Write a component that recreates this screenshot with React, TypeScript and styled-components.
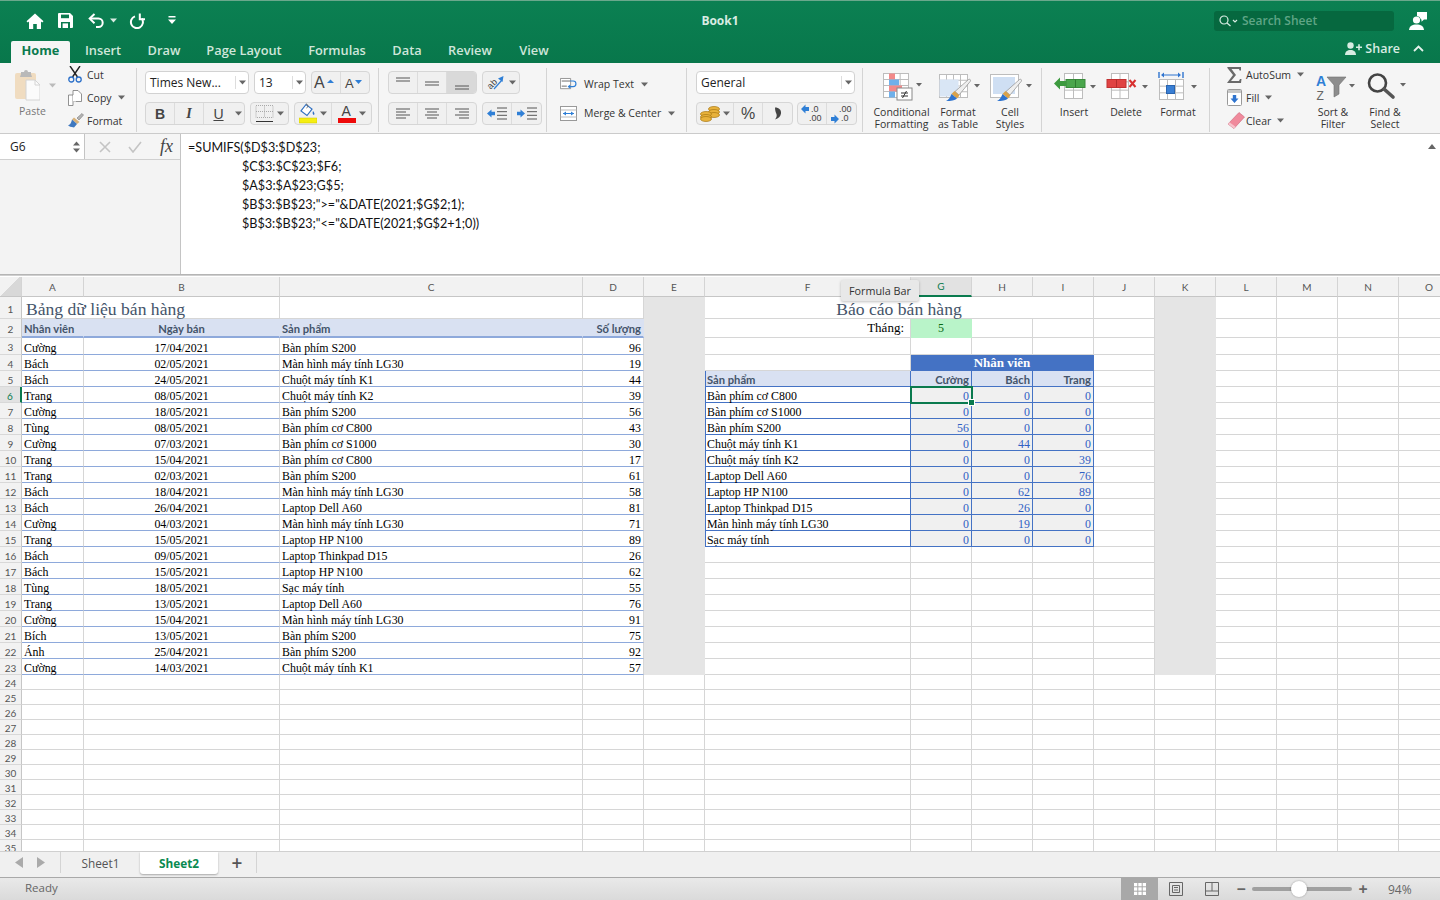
import React from "react";
import styled, { createGlobalStyle, css } from "styled-components";

const uiFont = `"Open Sans", "Liberation Sans", sans-serif`;
const calibri = `Lato, "Noto Sans", sans-serif`;
const times = `"Liberation Serif", serif`;

const GlobalStyle = createGlobalStyle`
  html, body { margin: 0; padding: 0; background: #fff; }
  * { box-sizing: border-box; }
`;

/* ---------- small drawings ---------- */

const Caret = ({ x, y, c = "#666" }: { x: number; y: number; c?: string }) => (
  <path d={`M${x} ${y}h6l-3 3.5z`} fill={c} />
);

const CaretIcon = ({ c = "#666" }: { c?: string }) => (
  <svg width="7" height="5" viewBox="0 0 7 5"><path d="M0 .5h7L3.5 4.5z" fill={c} /></svg>
);

const HomeIcon = () => (
  <svg width="18" height="16" viewBox="0 0 18 16">
    <path d="M9 .5 .5 8.2l1.3 1.2L3 8.4V16h4.2v-5h3.6v5H15V8.4l1.2 1 1.3-1.2z" fill="#fff" />
  </svg>
);
const SaveIcon = () => (
  <svg width="15" height="15" viewBox="0 0 15 15">
    <path d="M1 0h11l3 3v11a1 1 0 0 1-1 1H1a1 1 0 0 1-1-1V1a1 1 0 0 1 1-1z" fill="#fff" />
    <rect x="3" y="1.6" width="8" height="3.6" fill="#0a7a4e" />
    <rect x="3" y="9" width="9" height="6" fill="#0a7a4e" />
    <rect x="4.6" y="10.4" width="5.4" height="4.6" fill="#fff" />
  </svg>
);
const UndoIcon = () => (
  <svg width="17" height="15" viewBox="0 0 17 15" fill="none" stroke="#fff" strokeWidth="2">
    <path d="M6.5 1 1.7 5.6l4.8 4.6" />
    <path d="M2 5.6h8.5a4.2 4.2 0 0 1 0 8.4H8" />
  </svg>
);
const RedoIcon = () => (
  <svg width="16" height="16" viewBox="0 0 16 16" fill="none" stroke="#fff" strokeWidth="2">
    <path d="M6 3.4a6 6 0 1 0 6.8 2.2" />
    <path d="M10.8 .4v5.8H16" />
  </svg>
);
const CustomizeIcon = () => (
  <svg width="8" height="9" viewBox="0 0 8 9"><path d="M.5 0h7v1.6h-7zM0 3.6h8L4 8z" fill="#fff" /></svg>
);
const SearchIcon = () => (
  <svg width="20" height="12" viewBox="0 0 20 12" fill="none" stroke="#d9ece3" strokeWidth="1.2">
    <circle cx="5" cy="5" r="4" />
    <path d="m8 8 3.5 3" />
    <path d="m14 5 2 2 2-2" />
  </svg>
);
const PersonChatIcon = () => (
  <svg width="18" height="18" viewBox="0 0 18 18">
    <circle cx="7.5" cy="8" r="3.6" fill="#fff" />
    <path d="M0 18c.3-4 3.2-5.6 7.5-5.6S14.700 14 15 18z" fill="#fff" />
    <path d="M8 0h10v7.500h-3l-2.500 2.300V7.500H12A5 5 0 0 0 8 4z" fill="#fff" />
  </svg>
);
const AddPersonIcon = () => (
  <svg width="17" height="13" viewBox="0 0 17 13">
    <circle cx="5.500" cy="3.500" r="3.200" fill="#d8ece2" />
    <path d="M0 13c.2-3.600 2.200-5 5.500-5s5.300 1.400 5.500 5z" fill="#d8ece2" />
    <path d="M11 5.300h6M14 2.300v6" stroke="#d8ece2" strokeWidth="1.600" />
  </svg>
);
const ChevronUp = () => (
  <svg width="11" height="7" viewBox="0 0 11 7" fill="none" stroke="#e6f2ec" strokeWidth="1.800"><path d="m1 6 4.500-4.500L10 6" /></svg>
);
const PasteIcon = () => (
  <svg width="25" height="32" viewBox="0 0 25 32">
    <rect x="0" y="4" width="21" height="26" rx="2" fill="#f0dcc0" />
    <path d="M6 5V3h3a2 2 0 0 1 4 0h3v2l1 3H5z" fill="#b9b9b9" />
    <path d="M11 11h9l5 5v15H11z" fill="#fbfbfb" stroke="#d4d4d4" />
    <path d="M20 11v5h5" fill="none" stroke="#d4d4d4" />
  </svg>
);
const CutIcon = () => (
  <svg width="14" height="17" viewBox="0 0 14 17" fill="none">
    <path d="M2 0 9.500 11M12 0 4.500 11" stroke="#222" strokeWidth="1.400" />
    <circle cx="3.300" cy="13.500" r="2.500" stroke="#2a6fc9" strokeWidth="1.300" />
    <circle cx="10.700" cy="13.500" r="2.500" stroke="#2a6fc9" strokeWidth="1.300" />
  </svg>
);
const CopyIcon = () => (
  <svg width="14" height="16" viewBox="0 0 14 16" fill="#fff" stroke="#777" strokeWidth=".8">
    <path d="M5 .5h5l3.500 3.500v7.500H5z" />
    <path d="M.5 5H5v10.500H.5z" />
    <path d="M5 5h3v6.500H5z" stroke="none" />
  </svg>
);
const BrushIcon = () => (
  <svg width="16" height="15" viewBox="0 0 16 15">
    <path d="M9 5 14 .5l1.500 1.500L11 7z" fill="#b5b5b5" stroke="#777" strokeWidth=".6" />
    <path d="M6 4.500 11.500 9 9 11 4 6.500z" fill="#d8b27a" />
    <path d="M4 6.500 9 11l-3 3.500C3 14 1 13.500 0 12c2 0 3-1.500 4-5.500z" fill="#3f78bf" />
  </svg>
);
const GrowIcon = ({ up }: { up: boolean }) => (
  <svg width="26" height="21" viewBox="0 0 26 21">
    <text x={up ? 1 : 3} y="16" fontFamily="Liberation Sans" fontSize={up ? 16 : 13} fill="#444">A</text>
    <path d={up ? "M14 11l3.500-3.500L21 11z" : "M13 8h7l-3.500 4z"} fill="#2f7fd6" />
  </svg>
);
const AlignLines = ({ ys, x = [] as number[][] }: { ys: number[]; x?: number[][] }) => (
  <svg width="16" height="14" viewBox="0 0 16 14" stroke="#555" strokeWidth="1">
    {ys.map((y, i) => <line key={i} x1={x[i] ? x[i][0] : 1} x2={x[i] ? x[i][1] : 15} y1={y} y2={y} />)}
  </svg>
);
const OrientIcon = () => (
  <svg width="20" height="21" viewBox="0 0 20 21">
    <text x="1" y="15" fontFamily="Liberation Sans" fontSize="9" fill="#444" transform="rotate(-45 6 12)">ab</text>
    <path d="m8 17 8-9" stroke="#2f7fd6" strokeWidth="1.200" />
    <path d="m17.500 4-1 6-4.500-3.500z" fill="#2f7fd6" />
  </svg>
);
const IndentIcon = ({ right }: { right?: boolean }) => (
  <svg width="20" height="13" viewBox="0 0 20 13">
    <path d={right ? "M8 6.500 3.500 2.500v2.300H0v3.400h3.500v2.300z" : "M0 6.500 4.500 2.500v2.300H8v3.400H4.500v2.300z"} fill="#2f7fd6" />
    <path d="M10 1h10M10 4.700h10M10 8.300h10M10 12h10" stroke="#555" />
  </svg>
);
const BorderIcon = () => (
  <svg width="19" height="18" viewBox="0 0 19 18" fill="none">
    <path d="M1 .5h17v12H1zM9.500.5v12M1 6.500h17" stroke="#aaa" strokeDasharray="1 1" />
    <path d="M1 16.500h17" stroke="#333" />
  </svg>
);
const FillIcon = () => (
  <svg width="18" height="21" viewBox="0 0 18 21">
    <path d="M7 1.500 2 8l6 4.500 5-6.500z" fill="#fff" stroke="#2f6fc0" strokeWidth="1.200" />
    <path d="M7 1c2 0 2.500 3 .6 4" fill="none" stroke="#666" />
    <path d="M14 8c1.500 2 2 3 .8 4-1.200-.4-1.500-2-.8-4z" fill="#2f6fc0" />
    <rect x="0" y="15" width="18" height="5" fill="#f5ee12" stroke="#c9c300" strokeWidth=".5" />
  </svg>
);
const FontColorIcon = () => (
  <svg width="18" height="21" viewBox="0 0 18 21">
    <text x="3.500" y="13" fontFamily="Liberation Sans" fontSize="14" fill="#444">A</text>
    <rect x="0" y="15" width="18" height="5" fill="#ee0a0a" />
  </svg>
);
const WrapIcon = () => (
  <svg width="20" height="14" viewBox="0 0 20 14" fill="none">
    <path d="M.5 .5h12v12H.5z" stroke="#888" fill="#fff" />
    <path d="M2 3.500h10M2 9.500h6" stroke="#555" />
    <path d="M12 3.500h3.500a3 3 0 0 1 0 6.500H10" stroke="#2f7fd6" strokeWidth="1.400" />
    <path d="m12 7.500-3 2.500 3 2.500z" fill="#2f7fd6" />
  </svg>
);
const MergeIcon = () => (
  <svg width="17" height="15" viewBox="0 0 17 15" fill="none">
    <rect x=".5" y=".5" width="16" height="14" fill="#fff" stroke="#999" />
    <path d="M.5 4h16M.5 11h16" stroke="#bbb" />
    <path d="M3 7.500h11" stroke="#2f7fd6" />
    <path d="M3 7.500 6 5.500v4zM14 7.500l-3-2v4z" fill="#2f7fd6" />
  </svg>
);
const CoinsIcon = () => (
  <svg width="20" height="16" viewBox="0 0 20 16">
    {[[14, 3], [14, 6], [14, 9], [6, 8], [6, 11], [6, 13]].map(([x, y], i) => (
      <ellipse key={i} cx={x} cy={y} rx="5.500" ry="2.500" fill="#e8b23c" stroke="#a97813" strokeWidth=".7" />
    ))}
  </svg>
);
const CommaIcon = () => (
  <svg width="8" height="13" viewBox="0 0 8 13">
    <path d="M1 .5c4 0 6.500 2.500 6 6-.4 2.700-2.500 5-6 6 1.300-1.700 2-3.300 1.600-5C2.200 6 1 4.500 1 .5z" fill="#444" />
  </svg>
);
const DecimalIcon = ({ more }: { more?: boolean }) => (
  <svg width="22" height="20" viewBox="0 0 22 20">
    {more ? (
      <path d="M8 15 3.500 10.500V13H0v4h3.500v2.500z" fill="#2f7fd6" />
    ) : (
      <path d="M0 5 4.500 .5V3H8v4H4.500v2.500z" fill="#2f7fd6" />
    )}
    <text x={more ? 8 : 10} y="8" fontFamily="Liberation Sans" fontSize="9" fill="#444">{more ? ".00" : ".0"}</text>
    <text x={more ? 10 : 8} y="17" fontFamily="Liberation Sans" fontSize="9" fill="#444">{more ? ".0" : ".00"}</text>
  </svg>
);
const GridLines = ({ x, y, w, h, cols, rows }: { x: number; y: number; w: number; h: number; cols: number; rows: number }) => (
  <g stroke="#bdbdbd" fill="none">
    <rect x={x + 0.5} y={y + 0.5} width={w} height={h} fill="#fff" />
    {Array.from({ length: cols - 1 }, (_, i) => <line key={i} x1={x + 0.5 + ((i + 1) * w) / cols} x2={x + 0.5 + ((i + 1) * w) / cols} y1={y} y2={y + h} />)}
    {Array.from({ length: rows - 1 }, (_, i) => <line key={i} y1={y + 0.5 + ((i + 1) * h) / rows} y2={y + 0.5 + ((i + 1) * h) / rows} x1={x} x2={x + w} />)}
  </g>
);
const Brush = () => (
  <g>
    <path d="M36.500 8.500c1.500-.8 2.500.5 1.800 1.800L27 24l-4-3.500z" fill="#efefef" stroke="#8c8c8c" strokeWidth=".7" />
    <path d="M22.500 20l5 4.500-2.500 3-5.500-4.500z" fill="#d9a24a" />
    <path d="M19.500 23l5.500 4.500c-2 2-6 2.500-11 2.500 2.500-1 4-3.500 5.500-7z" fill="#2f74cf" />
  </g>
);
const ConditionalIcon = () => (
  <svg width="60" height="36" viewBox="0 0 60 36">
    <g transform="translate(11 2)">
      <GridLines x={0} y={0} w={25} h={24} cols={3} rows={4} />
      <rect x="6" y="0.500" width="6" height="6" fill="#f28a8a" />
      <rect x="6" y="6.500" width="10" height="6" fill="#6fb0ea" />
      <rect x="6" y="12.500" width="13" height="6" fill="#f28a8a" />
      <rect x="6" y="18.500" width="6" height="6" fill="#6fb0ea" />
      <rect x="14" y="15" width="15" height="12" fill="#fff" stroke="#888" />
      <path d="M18 20h7M18 23h7M23.500 18l-4 7" stroke="#333" fill="none" />
    </g>
    <Caret x={44} y={12} />
  </svg>
);
const TableStyleIcon = ({ cell }: { cell?: boolean }) => (
  <svg width="52" height="36" viewBox="0 0 52 36">
    <g transform={cell ? "translate(-1 0)" : undefined}>
      <GridLines x={7} y={3} w={28} h={23} cols={cell ? 1 : 4} rows={cell ? 1 : 4} />
      <rect x={cell ? 10 : 7.500} y={cell ? 6 : 8.500} width={cell ? 22 : 19} height={cell ? 17 : 17} fill={cell ? "#cfdff3" : "#d9e6f5"} />
      <Brush />
    </g>
    <Caret x={42} y={13} />
  </svg>
);
const InsertIcon = () => (
  <svg width="52" height="36" viewBox="0 0 52 36">
    <GridLines x={16} y={2} w={18} h={25} cols={2} rows={3} />
    <rect x="18" y="8.500" width="19" height="8" fill="#4aa64c" stroke="#3a8a3c" />
    <line x1="27.500" x2="27.500" y1="8.500" y2="16.500" stroke="#2e7c30" />
    <path d="M6 12.500 12 6.500V10h6v5h-6v3.500z" fill="#3d9a3f" />
    <Caret x={42} y={14} />
  </svg>
);
const DeleteIcon = () => (
  <svg width="52" height="36" viewBox="0 0 52 36">
    <GridLines x={11} y={2} w={17} h={25} cols={2} rows={3} />
    <rect x="7" y="8.500" width="19" height="8" fill="#e04343" stroke="#c13232" />
    <line x1="16.500" x2="16.500" y1="8.500" y2="16.500" stroke="#b52d2d" />
    <path d="m29.500 9 6 7M35.500 9l-6 7" stroke="#d8302f" strokeWidth="2" />
    <Caret x={42} y={14} />
  </svg>
);
const FormatCellIcon = () => (
  <svg width="52" height="36" viewBox="0 0 52 36">
    <path d="M7 1v6M31 1v6" stroke="#2f74cf" strokeWidth="1.400" />
    <path d="M10 4h18" stroke="#2f74cf" />
    <path d="M9 4l3-2.500v5zM29 4l-3-2.500v5z" fill="#2f74cf" />
    <GridLines x={7} y={8} w={24} h={20} cols={3} rows={3} />
    <rect x="14.500" y="14.500" width="8" height="8" fill="#3a7fd4" stroke="#2a65b0" />
    <Caret x={39} y={14} />
  </svg>
);
const SumIcon = () => (
  <svg width="15" height="16" viewBox="0 0 15 16"><path d="M1 0h13v3.500h-1.500L12 2H4.500L9 8l-5 6h8l1-2h1.500L14 16H0l6-8L0 .5z" fill="#6a6a6a" /></svg>
);
const FillDownIcon = () => (
  <svg width="15" height="17" viewBox="0 0 15 17">
    <rect x=".5" y=".5" width="14" height="16" rx="1" fill="#fff" stroke="#999" />
    <rect x="1" y="1" width="13" height="3" fill="#c8c8c8" />
    <path d="M7.500 14 3.500 9.500h2.300V6h3.400v3.500h2.300z" fill="#2f74cf" />
  </svg>
);
const EraserIcon = () => (
  <svg width="18" height="17" viewBox="0 0 18 17">
    <path d="M12 .5 17.500 5 7 16.500 1 12z" fill="#f08a9c" stroke="#c96578" strokeWidth=".6" />
    <path d="M1 12l6 4.500 1.500-1.700-6-4.500z" fill="#f7c3cc" />
  </svg>
);
const SortIcon = () => (
  <svg width="52" height="32" viewBox="0 0 52 32">
    <text x="9" y="15" fontFamily="Liberation Sans" fontSize="14" fontWeight="700" fill="#2f7fd6">A</text>
    <text x="9.500" y="29" fontFamily="Liberation Sans" fontSize="12" fill="#666">Z</text>
    <path d="M20 6h19l-7 8v9l-5 3V14z" fill="#8d8d8d" stroke="#6e6e6e" strokeWidth=".6" />
    <Caret x={42} y={13} />
  </svg>
);
const FindIcon = () => (
  <svg width="52" height="32" viewBox="0 0 52 32" fill="none">
    <circle cx="18.500" cy="12" r="8.500" stroke="#444" strokeWidth="2.600" />
    <path d="m25 18 9 8" stroke="#555" strokeWidth="3.600" strokeLinecap="round" />
    <Caret x={41} y={12} />
  </svg>
);
const ArrowTriangle = ({ dir, c = "#aaa" }: { dir: "l" | "r"; c?: string }) => (
  <svg width="8" height="11" viewBox="0 0 8 11"><path d={dir === "l" ? "M8 0v11L0 5.500z" : "M0 0v11l8-5.500z"} fill={c} /></svg>
);

/* ---------- window chrome ---------- */

const Page = styled.div`
  width: 1440px;
  height: 900px;
  display: flex;
  flex-direction: column;
  overflow: hidden;
  position: relative;
  font-family: ${uiFont};
`;

const GreenHead = styled.header`
  height: 63px;
  flex: none;
  background: linear-gradient(#0b8052, #08774b);
  border-top: 1px solid #6aa88c;
  color: #fff;
`;

const TitleRow = styled.div`
  height: 39px;
  display: grid;
  grid-template-columns: 1fr auto 1fr;
  align-items: center;
`;

const QuickAccess = styled.div`
  display: flex;
  align-items: center;
  padding-left: 26px;
`;

const QuickBtn = styled.span<{ $w: number }>`
  width: ${(p) => p.$w}px;
  display: flex;
  align-items: center;
  gap: 5px;
`;

const BookTitle = styled.div`
  font-size: 12px;
  font-weight: 700;
  color: #d9ece3;
`;

const RightTools = styled.div`
  display: flex;
  justify-content: flex-end;
  align-items: center;
  padding-right: 13px;
  gap: 15px;
`;

const SearchBox = styled.div`
  width: 180px;
  height: 20px;
  border-radius: 3px;
  background: #06683f;
  display: flex;
  align-items: center;
  gap: 3px;
  padding-left: 5px;
  font-size: 12px;
  font-weight: 600;
  color: #5fa586;
`;

const TabRow = styled.nav`
  height: 23px;
  display: flex;
  align-items: flex-end;
  padding-left: 11px;
`;

const RibbonTab = styled.div<{ $active?: boolean; $w: number }>`
  width: ${(p) => p.$w}px;
  height: 22px;
  padding-bottom: 4px;
  display: flex;
  align-items: center;
  justify-content: center;
  font-size: 12.800px;
  font-weight: 600;
  color: #cfe6da;
  ${(p) =>
    p.$active &&
    css`
      background: #f5f5f5;
      color: #0a7a4e;
      font-weight: 700;
      border-radius: 2px 2px 0 0;
    `}
`;

const ShareBox = styled.div`
  margin-left: auto;
  height: 22px;
  padding: 0 16px 7px 0;
  display: flex;
  align-items: center;
  gap: 3px;
  font-size: 12.500px;
  font-weight: 600;
  color: #d8ece2;
  svg:last-child {
    margin-left: 10px;
  }
`;

/* ---------- ribbon ---------- */

const Ribbon = styled.div`
  height: 71px;
  flex: none;
  display: flex;
  background: #f5f5f5;
  border-bottom: 1px solid #cbcbcb;
  color: #333;
  font-size: 10.500px;
`;

const Section = styled.section<{ $w: number; $pad: number }>`
  width: ${(p) => p.$w}px;
  height: 64px;
  margin-top: 5px;
  padding: 3px 0 0 ${(p) => p.$pad}px;
  flex: none;
  border-right: 1px solid #d4d4d4;
  display: flex;
  align-items: flex-start;

  &:last-child {
    border-right: none;
  }
`;

const PasteButton = styled.div`
  width: 53px;
  margin-top: -2px;
  display: flex;
  flex-direction: column;
  color: #777;
`;

const PasteTop = styled.div`
  display: flex;
  align-items: center;
  gap: 9px;
  height: 32px;
`;

const PasteLabel = styled.div`
  margin-top: 3px;
  padding-left: 4px;
`;

const SmallStack = styled.div<{ $w?: number }>`
  ${(p) => p.$w && `width: ${p.$w}px;`}
  flex: none;
  display: flex;
  flex-direction: column;
  margin-top: -8px;
`;

const SmallRow = styled.div`
  height: 23px;
  flex: none;
  display: flex;
  align-items: center;
`;

const IconSlot = styled.span`
  width: 19px;
  flex: none;
  display: flex;
  align-items: center;
  justify-content: flex-start;
`;

const CaretGap = styled.span`
  margin-left: 6px;
  display: flex;
`;

const TwoRows = styled.div`
  display: flex;
  flex-direction: column;
  gap: 8px;
`;

const ControlRow = styled.div<{ $gap?: number }>`
  display: flex;
  gap: ${(p) => p.$gap ?? 5}px;
  height: 23px;
`;

const Combo = styled.div<{ $w: number }>`
  width: ${(p) => p.$w}px;
  height: 23px;
  background: #fff;
  border: 1px solid #d2d2d2;
  border-radius: 4px;
  display: flex;
  align-items: center;
  font-size: 12px;
  color: #222;
  padding: 0 0 1px 4px;
  position: relative;
`;

const ComboArrow = styled.span`
  margin-left: auto;
  width: 13px;
  height: 13px;
  border-left: 1px solid #ddd;
  display: flex;
  align-items: center;
  justify-content: center;
`;

const ButtonGroup = styled.div`
  display: flex;
  height: 23px;
  background: #f0f0f0;
  border: 1px solid #d6d6d6;
  border-radius: 4px;
  overflow: hidden;
`;

const GroupBtn = styled.div<{ $w: number; $active?: boolean; $plain?: boolean }>`
  width: ${(p) => p.$w}px;
  flex: none;
  display: flex;
  align-items: center;
  justify-content: center;
  gap: 3px;
  color: #444;
  ${(p) => !p.$plain && `border-right: 1px solid #dcdcdc;`}
  ${(p) => p.$active && `background: #d9d9d9;`}

  &:last-child {
    border-right: none;
  }
`;

const BoldGlyph = styled.span<{ $style: "b" | "i" | "u" }>`
  font-size: 14px;
  line-height: 18px;
  font-family: "Liberation Sans", sans-serif;
  ${(p) => p.$style === "b" && `font-weight: 700;`}
  ${(p) => p.$style === "i" && `font-style: italic; font-family: "Liberation Serif", serif; font-weight: 700;`}
  ${(p) => p.$style === "u" && `text-decoration: underline;`}
`;

const WrapStack = styled.div`
  display: flex;
  flex-direction: column;
  gap: 7px;
  padding-top: 2px;
`;

const WrapRow = styled.div`
  display: flex;
  align-items: center;
  height: 22px;
  gap: 7px;
`;

const RowIcon = styled.span`
  width: 17px;
  display: flex;
`;

const BigButton = styled.div<{ $w: number }>`
  width: ${(p) => p.$w}px;
  flex: none;
  display: flex;
  flex-direction: column;
  align-items: center;
  text-align: center;
  line-height: 12px;
`;

const BigIcon = styled.div`
  height: 35px;
  display: flex;
  align-items: flex-start;
`;

const Percent = styled.span`
  font-size: 16px;
  line-height: 18px;
  font-family: "Liberation Sans", sans-serif;
`;

/* ---------- formula bar ---------- */

const FormulaBar = styled.div`
  height: 141px;
  flex: none;
  display: flex;
  background: #fff;
  border-bottom: 1px solid #b5b5b5;
`;

const NameColumn = styled.div`
  width: 181px;
  flex: none;
  background: #f3f3f3;
  border-right: 1px solid #c4c4c4;
  display: flex;
  flex-direction: column;
`;

const NameTop = styled.div`
  height: 26px;
  background: #f5f5f5;
  display: flex;
  border-bottom: 1px solid #d0d0d0;
`;

const NameBox = styled.div`
  width: 85px;
  background: #fff;
  border-right: 1px solid #c4c4c4;
  display: flex;
  align-items: center;
  padding-left: 10px;
  font-size: 12px;
  color: #222;
  position: relative;
`;

const Stepper = styled.span`
  margin-left: auto;
  margin-right: 4px;
  display: flex;
  flex-direction: column;
  gap: 2px;
`;

const FxButtons = styled.div`
  flex: 1;
  display: flex;
  align-items: center;
  padding-left: 14px;
  gap: 17px;
`;

const FxGlyph = styled.span`
  font-family: ${times};
  font-style: italic;
  font-size: 18px;
  color: #444;
  margin-left: 1px;
`;

const FormulaText = styled.div`
  flex: 1;
  padding: 4px 0 0 7px;
  font-family: ${calibri};
  font-size: 12.600px;
  line-height: 19px;
  color: #111;
  position: relative;
`;

const FormulaLine = styled.div<{ $indent?: boolean }>`
  ${(p) => p.$indent && `padding-left: 54px;`}
`;

const ScrollUp = styled.span`
  position: absolute;
  right: 4px;
  top: 10px;
  width: 0;
  height: 0;
  border-left: 4px solid transparent;
  border-right: 4px solid transparent;
  border-bottom: 5px solid #666;
`;

/* ---------- sheet ---------- */

const SheetArea = styled.div`
  flex: 1;
  min-height: 0;
  overflow: hidden;
  position: relative;
  border-top: 1px solid #cfcfcf;
  padding-top: 1px;
  background: #fff;
`;

const SheetGrid = styled.div`
  display: grid;
  grid-template-columns: 22px 62px 196px 303px 61px 61px 206px 61px 61px 61px 61px 61px 61px 61px 61px 61px;
  grid-template-rows: 20px 22px 19px 17px repeat(20, 16px) repeat(12, 15px);
`;

const ColHead = styled.div<{ $sel?: boolean; $corner?: boolean }>`
  background: ${(p) => (p.$sel ? "#e2e2e2" : "#f2f2f2")};
  border-right: 1px solid #d4d4d4;
  border-bottom: ${(p) => (p.$sel ? "2px solid #0a7a4e" : "1px solid #c6c6c6")};
  color: ${(p) => (p.$sel ? "#0a7a4e" : "#555")};
  font-family: ${calibri};
  font-size: 10px;
  display: flex;
  align-items: center;
  justify-content: center;
  ${(p) =>
    p.$corner &&
    css`
      background: linear-gradient(135deg, #f2f2f2 50%, #d8d8d8 50%);
    `}
`;

const RowHead = styled.div<{ $sel?: boolean }>`
  background: ${(p) => (p.$sel ? "#e2e2e2" : "#f2f2f2")};
  border-right: ${(p) => (p.$sel ? "2px solid #0a7a4e" : "1px solid #c6c6c6")};
  border-bottom: 1px solid #d8d8d8;
  color: ${(p) => (p.$sel ? "#0a7a4e" : "#555")};
  font-family: ${calibri};
  font-size: 10px;
  padding-top: 2px;
  display: flex;
  align-items: center;
  justify-content: center;
`;

type Kind =
  | "blank"
  | "grey"
  | "title"
  | "head"
  | "data"
  | "reportTitle"
  | "monthLabel"
  | "monthValue"
  | "banner"
  | "repHead"
  | "repName"
  | "repNum";

const kinds: Record<Kind, ReturnType<typeof css>> = {
  blank: css``,
  grey: css`
    background: #e5e5e5;
    border-color: #e5e5e5;
  `,
  title: css`
    font-size: 17.600px;
    color: #44546a;
    padding: 4px 0 0 4px;
  `,
  head: css`
    background: #d9e1f2;
    color: #44546a;
    font-family: ${calibri};
    font-weight: 700;
    font-size: 11.200px;
    padding-top: 2px;
    border-right-color: #d9e1f2;
    border-bottom: 2px solid #8ea9db;
  `,
  data: css`
    padding-top: 4px;
    border-bottom-color: #8ea9db;
  `,
  reportTitle: css`
    font-size: 17.600px;
    color: #44546a;
    padding-top: 4px;
    justify-content: center;
  `,
  monthLabel: css`
    justify-content: flex-end;
    font-size: 13px;
    padding-right: 6px;
  `,
  monthValue: css`
    background: #b9f4c9;
    border-color: #b9f4c9;
    color: #0a6a14;
    justify-content: center;
    font-size: 12px;
  `,
  banner: css`
    background: #4472c4;
    border-color: #4472c4;
    color: #fff;
    font-weight: 700;
    font-size: 13px;
    justify-content: center;
  `,
  repHead: css`
    background: #d9e1f2;
    color: #44546a;
    font-family: ${calibri};
    font-weight: 700;
    font-size: 11.200px;
    padding-top: 2px;
    border: 1px solid #4472c4;
    border-width: 0 1px 1px 0;
  `,
  repName: css`
    padding-top: 4px;
    border: 1px solid #4472c4;
    border-width: 0 1px 1px 0;
  `,
  repNum: css`
    padding-top: 4px;
    background: #f0f0f0;
    color: #2f5fc4;
    border: 1px solid #4472c4;
    border-width: 0 1px 1px 0;
  `,
};

const Cell = styled.div<{ $kind: Kind; $align?: "left" | "center" | "right"; $span?: number; $first?: boolean }>`
  grid-column: span ${(p) => p.$span ?? 1};
  display: flex;
  align-items: center;
  white-space: nowrap;
  min-width: 0;
  padding: 0 2px;
  justify-content: ${(p) => (p.$align === "center" ? "center" : p.$align === "right" ? "flex-end" : "flex-start")};
  font-family: ${times};
  font-size: 11.900px;
  color: #000;
  border-right: 1px solid #d6d6d6;
  border-bottom: 1px solid #d6d6d6;
  ${(p) => kinds[p.$kind]}
  ${(p) =>
    p.$first &&
    css`
      box-shadow: inset 1px 0 0 #4472c4;
    `}
`;

const ActiveCell = styled(Cell)`
  position: relative;
  outline: 2px solid #0a7a4e;
  outline-offset: -1px;
  z-index: 1;

  &::after {
    content: "";
    position: absolute;
    right: -4px;
    bottom: -4px;
    width: 5px;
    height: 5px;
    background: #0a7a4e;
    border: 1px solid #fff;
  }
`;

const Tooltip = styled.div`
  position: absolute;
  left: 841px;
  top: 4px;
  width: 78px;
  height: 21px;
  background: #e8e8e8;
  border-radius: 2px;
  box-shadow: 0 1px 3px rgba(0, 0, 0, 0.25);
  font-size: 10.800px;
  color: #333;
  display: flex;
  align-items: center;
  justify-content: center;
  z-index: 3;
`;

/* ---------- bottom bars ---------- */

const SheetTabs = styled.div`
  height: 27px;
  flex: none;
  background: #f0f0f0;
  border-top: 1px solid #d0d0d0;
  border-bottom: 1px solid #a9a9a9;
  display: flex;
  align-items: stretch;
  font-size: 11.800px;
  color: #555;
`;

const NavArrows = styled.div`
  width: 61px;
  padding-left: 15px;
  gap: 14px;
  display: flex;
  align-items: center;
  border-right: 1px solid #d4d4d4;
  margin-bottom: 4px;
`;

const SheetTab = styled.div<{ $active?: boolean; $w: number }>`
  width: ${(p) => p.$w}px;
  display: flex;
  align-items: center;
  justify-content: center;
  margin-bottom: 3px;
  ${(p) =>
    p.$active &&
    css`
      background: #fff;
      color: #0a8a50;
      font-weight: 700;
      border-radius: 0 0 3px 3px;
      box-shadow: 0 1px 2px rgba(0, 0, 0, 0.3);
    `}
`;

const AddSheet = styled.div`
  width: 39px;
  display: flex;
  align-items: center;
  justify-content: center;
  border-right: 1px solid #d4d4d4;
  margin-bottom: 4px;
  font-size: 19px;
  font-weight: 600;
  color: #555;
`;

const StatusBar = styled.footer`
  height: 22px;
  flex: none;
  display: flex;
  align-items: center;
  background: linear-gradient(#e9e9e9, #dadada);
  padding-left: 25px;
  font-size: 11.500px;
  color: #666;
`;

const ReadyText = styled.span`
  margin-bottom: 3px;
`;

const ViewButton = styled.div<{ $active?: boolean; $w: number }>`
  width: ${(p) => p.$w}px;
  height: 22px;
  display: flex;
  align-items: center;
  justify-content: center;
  ${(p) => p.$active && `background: #a8a8a8;`}
`;

const ViewGroup = styled.div`
  margin-left: auto;
  display: flex;
`;

const ZoomControl = styled.div`
  display: flex;
  align-items: center;
  margin-left: 6px;
  width: 132px;
  gap: 6px;
  color: #666;
`;

const ZoomSign = styled.span`
  font-size: 16px;
  font-weight: 700;
  line-height: 1;
  width: 10px;
  text-align: center;
  color: #666;
`;

const SliderTrack = styled.div`
  width: 100px;
  height: 4px;
  border-radius: 2px;
  background: #a0a0a0;
  position: relative;
`;

const SliderThumb = styled.span`
  position: absolute;
  left: 39px;
  top: -6px;
  width: 16px;
  height: 16px;
  border-radius: 50%;
  background: #fff;
  box-shadow: 0 0 2px rgba(0, 0, 0, 0.35);
`;

const ZoomValue = styled.div`
  width: 72px;
  padding-left: 20px;
  font-size: 12px;
  color: #666;
`;

/* ---------- data ---------- */

const sales: [string, string, string, number][] = [
  ["Cường", "17/04/2021", "Bàn phím S200", 96],
  ["Bách", "02/05/2021", "Màn hình máy tính LG30", 19],
  ["Bách", "24/05/2021", "Chuột máy tính K1", 44],
  ["Trang", "08/05/2021", "Chuột máy tính K2", 39],
  ["Cường", "18/05/2021", "Bàn phím S200", 56],
  ["Tùng", "08/05/2021", "Bàn phím cơ C800", 43],
  ["Cường", "07/03/2021", "Bàn phím cơ S1000", 30],
  ["Trang", "15/04/2021", "Bàn phím cơ C800", 17],
  ["Trang", "02/03/2021", "Bàn phím S200", 61],
  ["Bách", "18/04/2021", "Màn hình máy tính LG30", 58],
  ["Bách", "26/04/2021", "Laptop Dell A60", 81],
  ["Cường", "04/03/2021", "Màn hình máy tính LG30", 71],
  ["Trang", "15/05/2021", "Laptop HP N100", 89],
  ["Bách", "09/05/2021", "Laptop Thinkpad D15", 26],
  ["Bách", "15/05/2021", "Laptop HP N100", 62],
  ["Tùng", "18/05/2021", "Sạc máy tính", 55],
  ["Trang", "13/05/2021", "Laptop Dell A60", 76],
  ["Cường", "15/04/2021", "Màn hình máy tính LG30", 91],
  ["Bích", "13/05/2021", "Bàn phím S200", 75],
  ["Ánh", "25/04/2021", "Bàn phím S200", 92],
  ["Cường", "14/03/2021", "Chuột máy tính K1", 57],
];

const report: [string, number, number, number][] = [
  ["Bàn phím cơ C800", 0, 0, 0],
  ["Bàn phím cơ S1000", 0, 0, 0],
  ["Bàn phím S200", 56, 0, 0],
  ["Chuột máy tính K1", 0, 44, 0],
  ["Chuột máy tính K2", 0, 0, 39],
  ["Laptop Dell A60", 0, 0, 76],
  ["Laptop HP N100", 0, 62, 89],
  ["Laptop Thinkpad D15", 0, 26, 0],
  ["Màn hình máy tính LG30", 0, 19, 0],
  ["Sạc máy tính", 0, 0, 0],
];

const columns = "ABCDEFGHIJKLMNO".split("");

type CellDef = {
  kind: Kind;
  text?: string | number;
  align?: "left" | "center" | "right";
  span?: number;
  first?: boolean;
  active?: boolean;
};

// col index 0 = A; returns what sits in one cell of the sheet
const cellAt = (row: number, col: number): CellDef | null => {
  const name = columns[col];
  if ((name === "E" || name === "K") && row <= 23) return { kind: "grey" };

  if (col <= 3) {
    if (row === 1) {
      if (col === 0) return { kind: "title", text: "Bảng dữ liệu bán hàng", span: 2 };
      if (col === 1) return null;
    }
    if (row === 2) {
      const labels = ["Nhân viên", "Ngày bán", "Sản phẩm", "Số lượng"];
      const aligns = ["left", "center", "left", "right"] as const;
      return { kind: "head", text: labels[col], align: aligns[col] };
    }
    if (row >= 3 && row <= 23) {
      const rec = sales[row - 3];
      const aligns = ["left", "center", "left", "right"] as const;
      return { kind: "data", text: rec[col], align: aligns[col] };
    }
  }

  if (row === 1 && col >= 5 && col <= 8) {
    return col === 5 ? { kind: "reportTitle", text: "Báo cáo bán hàng", span: 4 } : null;
  }
  if (row === 2 && name === "F") return { kind: "monthLabel", text: "Tháng:" };
  if (row === 2 && name === "G") return { kind: "monthValue", text: 5 };
  if (row === 4 && col >= 6 && col <= 8) {
    return col === 6 ? { kind: "banner", text: "Nhân viên", span: 3 } : null;
  }
  if (row === 5 && col >= 5 && col <= 8) {
    const labels = ["Sản phẩm", "Cường", "Bách", "Trang"];
    return { kind: "repHead", text: labels[col - 5], align: col === 5 ? "left" : "right", first: col === 5 };
  }
  if (row >= 6 && row <= 15 && col >= 5 && col <= 8) {
    const rec = report[row - 6];
    if (col === 5) return { kind: "repName", text: rec[0], first: true };
    return { kind: "repNum", text: rec[col - 5], align: "right", active: row === 6 && col === 6 };
  }
  return { kind: "blank" };
};

const rowNumbers = Array.from({ length: 35 }, (_, i) => i + 1);

const Sheet = () => (
  <SheetGrid>
    <ColHead $corner />
    {columns.map((c) => (
      <ColHead key={c} $sel={c === "G"}>{c}</ColHead>
    ))}
    {rowNumbers.map((row) => (
      <React.Fragment key={row}>
        <RowHead $sel={row === 6}>{row}</RowHead>
        {columns.map((c, col) => {
          const def = cellAt(row, col);
          if (!def) return null;
          const Comp = def.active ? ActiveCell : Cell;
          return (
            <Comp key={c} $kind={def.kind} $align={def.align} $span={def.span} $first={def.first}>
              {def.text}
            </Comp>
          );
        })}
      </React.Fragment>
    ))}
  </SheetGrid>
);

const tabs: [string, number][] = [
  ["Home", 59],
  ["Insert", 66],
  ["Draw", 56],
  ["Page Layout", 104],
  ["Formulas", 82],
  ["Data", 58],
  ["Review", 68],
  ["View", 60],
];

const App = () => (
  <Page>
    <GlobalStyle />
    <GreenHead>
      <TitleRow>
        <QuickAccess>
          <QuickBtn $w={32}><HomeIcon /></QuickBtn>
          <QuickBtn $w={30}><SaveIcon /></QuickBtn>
          <QuickBtn $w={41}><UndoIcon /><CaretIcon c="#d9ece3" /></QuickBtn>
          <QuickBtn $w={39}><RedoIcon /></QuickBtn>
          <QuickBtn $w={8}><CustomizeIcon /></QuickBtn>
        </QuickAccess>
        <BookTitle>Book1</BookTitle>
        <RightTools>
          <SearchBox><SearchIcon />Search Sheet</SearchBox>
          <PersonChatIcon />
        </RightTools>
      </TitleRow>
      <TabRow>
        {tabs.map(([t, w], i) => (
          <RibbonTab key={t} $w={w} $active={i === 0}>{t}</RibbonTab>
        ))}
        <ShareBox><AddPersonIcon />Share<ChevronUp /></ShareBox>
      </TabRow>
    </GreenHead>

    <Ribbon>
      <Section $w={137} $pad={15}>
        <PasteButton>
          <PasteTop><PasteIcon /><CaretIcon c="#bbb" /></PasteTop>
          <PasteLabel>Paste</PasteLabel>
        </PasteButton>
        <SmallStack>
          <SmallRow><IconSlot><CutIcon /></IconSlot>Cut</SmallRow>
          <SmallRow><IconSlot><CopyIcon /></IconSlot><span>Copy</span><CaretGap><CaretIcon /></CaretGap></SmallRow>
          <SmallRow><IconSlot><BrushIcon /></IconSlot>Format</SmallRow>
        </SmallStack>
      </Section>

      <Section $w={242} $pad={8}>
        <TwoRows>
          <ControlRow>
            <Combo $w={104}>Times New...<ComboArrow><CaretIcon /></ComboArrow></Combo>
            <Combo $w={52}>13<ComboArrow><CaretIcon /></ComboArrow></Combo>
            <ButtonGroup>
              <GroupBtn $w={29}><GrowIcon up /></GroupBtn>
              <GroupBtn $w={28}><GrowIcon up={false} /></GroupBtn>
            </ButtonGroup>
          </ControlRow>
          <ControlRow>
            <ButtonGroup>
              <GroupBtn $w={29}><BoldGlyph $style="b">B</BoldGlyph></GroupBtn>
              <GroupBtn $w={29}><BoldGlyph $style="i">I</BoldGlyph></GroupBtn>
              <GroupBtn $w={29} $plain><BoldGlyph $style="u">U</BoldGlyph></GroupBtn>
              <GroupBtn $w={11}><CaretIcon /></GroupBtn>
            </ButtonGroup>
            <ButtonGroup>
              <GroupBtn $w={37}><BorderIcon /><CaretIcon /></GroupBtn>
            </ButtonGroup>
            <ButtonGroup>
              <GroupBtn $w={37}><FillIcon /><CaretIcon /></GroupBtn>
              <GroupBtn $w={39}><FontColorIcon /><CaretIcon /></GroupBtn>
            </ButtonGroup>
          </ControlRow>
        </TwoRows>
      </Section>

      <Section $w={168} $pad={9}>
        <TwoRows>
          <ControlRow>
            <ButtonGroup>
              <GroupBtn $w={29}><AlignLines ys={[2, 5]} /></GroupBtn>
              <GroupBtn $w={29}><AlignLines ys={[6, 9]} /></GroupBtn>
              <GroupBtn $w={29} $active><AlignLines ys={[10, 13]} /></GroupBtn>
            </ButtonGroup>
            <ButtonGroup>
              <GroupBtn $w={36}><OrientIcon /><CaretIcon /></GroupBtn>
            </ButtonGroup>
          </ControlRow>
          <ControlRow>
            <ButtonGroup>
              <GroupBtn $w={29}><AlignLines ys={[2, 5, 8, 11]} x={[[1, 15], [1, 11], [1, 15], [1, 11]]} /></GroupBtn>
              <GroupBtn $w={29}><AlignLines ys={[2, 5, 8, 11]} x={[[1, 15], [3, 13], [1, 15], [3, 13]]} /></GroupBtn>
              <GroupBtn $w={29}><AlignLines ys={[2, 5, 8, 11]} x={[[1, 15], [5, 15], [1, 15], [5, 15]]} /></GroupBtn>
            </ButtonGroup>
            <ButtonGroup>
              <GroupBtn $w={29}><IndentIcon /></GroupBtn>
              <GroupBtn $w={29}><IndentIcon right /></GroupBtn>
            </ButtonGroup>
          </ControlRow>
        </TwoRows>
      </Section>

      <Section $w={140} $pad={13}>
        <WrapStack>
          <WrapRow><RowIcon><WrapIcon /></RowIcon><span>Wrap Text</span><CaretIcon /></WrapRow>
          <WrapRow><RowIcon><MergeIcon /></RowIcon><span>Merge &amp; Center</span><CaretIcon /></WrapRow>
        </WrapStack>
      </Section>

      <Section $w={176} $pad={9}>
        <TwoRows>
          <ControlRow>
            <Combo $w={159}>General<ComboArrow><CaretIcon /></ComboArrow></Combo>
          </ControlRow>
          <ControlRow $gap={4}>
            <ButtonGroup>
              <GroupBtn $w={37}><CoinsIcon /><CaretIcon /></GroupBtn>
              <GroupBtn $w={29}><Percent>%</Percent></GroupBtn>
              <GroupBtn $w={29}><CommaIcon /></GroupBtn>
            </ButtonGroup>
            <ButtonGroup>
              <GroupBtn $w={29}><DecimalIcon /></GroupBtn>
              <GroupBtn $w={29}><DecimalIcon more /></GroupBtn>
            </ButtonGroup>
          </ControlRow>
        </TwoRows>
      </Section>

      <Section $w={179} $pad={8}>
        <BigButton $w={61}><BigIcon><ConditionalIcon /></BigIcon>Conditional Formatting</BigButton>
        <BigButton $w={52}><BigIcon><TableStyleIcon /></BigIcon>Format<br />as Table</BigButton>
        <BigButton $w={52}><BigIcon><TableStyleIcon cell /></BigIcon>Cell<br />Styles</BigButton>
      </Section>

      <Section $w={168} $pad={6}>
        <BigButton $w={52}><BigIcon><InsertIcon /></BigIcon>Insert</BigButton>
        <BigButton $w={52}><BigIcon><DeleteIcon /></BigIcon>Delete</BigButton>
        <BigButton $w={52}><BigIcon><FormatCellIcon /></BigIcon>Format</BigButton>
      </Section>

      <Section $w={230} $pad={17}>
        <SmallStack $w={80}>
          <SmallRow><IconSlot><SumIcon /></IconSlot><span>AutoSum</span><CaretGap><CaretIcon /></CaretGap></SmallRow>
          <SmallRow><IconSlot><FillDownIcon /></IconSlot><span>Fill</span><CaretGap><CaretIcon /></CaretGap></SmallRow>
          <SmallRow><IconSlot><EraserIcon /></IconSlot><span>Clear</span><CaretGap><CaretIcon /></CaretGap></SmallRow>
        </SmallStack>
        <BigButton $w={52}><BigIcon><SortIcon /></BigIcon>Sort &amp;<br />Filter</BigButton>
        <BigButton $w={52}><BigIcon><FindIcon /></BigIcon>Find &amp;<br />Select</BigButton>
      </Section>
    </Ribbon>

    <FormulaBar>
      <NameColumn>
        <NameTop>
          <NameBox>
            G6
            <Stepper>
              <svg width="7" height="5" viewBox="0 0 7 5"><path d="M0 4.500h7L3.500 .5z" fill="#666" /></svg>
              <CaretIcon />
            </Stepper>
          </NameBox>
          <FxButtons>
            <svg width="12" height="12" viewBox="0 0 12 12" stroke="#c4c4c4" strokeWidth="1.600"><path d="m1 1 10 10M11 1 1 11" /></svg>
            <svg width="14" height="12" viewBox="0 0 14 12" fill="none" stroke="#c4c4c4" strokeWidth="1.600"><path d="m1 6 4 5 8-10" /></svg>
            <FxGlyph>fx</FxGlyph>
          </FxButtons>
        </NameTop>
      </NameColumn>
      <FormulaText>
        <FormulaLine>=SUMIFS($D$3:$D$23;</FormulaLine>
        <FormulaLine $indent>$C$3:$C$23;$F6;</FormulaLine>
        <FormulaLine $indent>$A$3:$A$23;G$5;</FormulaLine>
        <FormulaLine $indent>$B$3:$B$23;"&gt;="&amp;DATE(2021;$G$2;1);</FormulaLine>
        <FormulaLine $indent>$B$3:$B$23;"&lt;="&amp;DATE(2021;$G$2+1;0))</FormulaLine>
        <ScrollUp />
      </FormulaText>
    </FormulaBar>

    <SheetArea>
      <Tooltip>Formula Bar</Tooltip>
      <Sheet />
    </SheetArea>

    <SheetTabs>
      <NavArrows><ArrowTriangle dir="l" /><ArrowTriangle dir="r" /></NavArrows>
      <SheetTab $w={79}>Sheet1</SheetTab>
      <SheetTab $w={78} $active>Sheet2</SheetTab>
      <AddSheet>+</AddSheet>
    </SheetTabs>

    <StatusBar>
      <ReadyText>Ready</ReadyText>
      <ViewGroup>
        <ViewButton $w={37} $active>
          <svg width="14" height="14" viewBox="0 0 14 14" fill="#fff" stroke="#a8a8a8"><path d="M.5 .5h13v13H.5zM4.800 .5v13M9.200 .5v13M.5 4.800h13M.5 9.200h13" /></svg>
        </ViewButton>
        <ViewButton $w={36}>
          <svg width="14" height="14" viewBox="0 0 14 14" fill="none" stroke="#666"><path d="M.5 .5h13v13H.5zM3.500 3.500h7v7h-7zM5 5.500h4M5 8h4" /></svg>
        </ViewButton>
        <ViewButton $w={36}>
          <svg width="14" height="14" viewBox="0 0 14 14" fill="none" stroke="#666"><path d="M.5 .5h13v13H.5zM.5 9h13M7 .5V9" /></svg>
        </ViewButton>
      </ViewGroup>
      <ZoomControl>
        <ZoomSign>−</ZoomSign>
        <SliderTrack><SliderThumb /></SliderTrack>
        <ZoomSign>+</ZoomSign>
      </ZoomControl>
      <ZoomValue>94%</ZoomValue>
    </StatusBar>
  </Page>
);

export default App;
